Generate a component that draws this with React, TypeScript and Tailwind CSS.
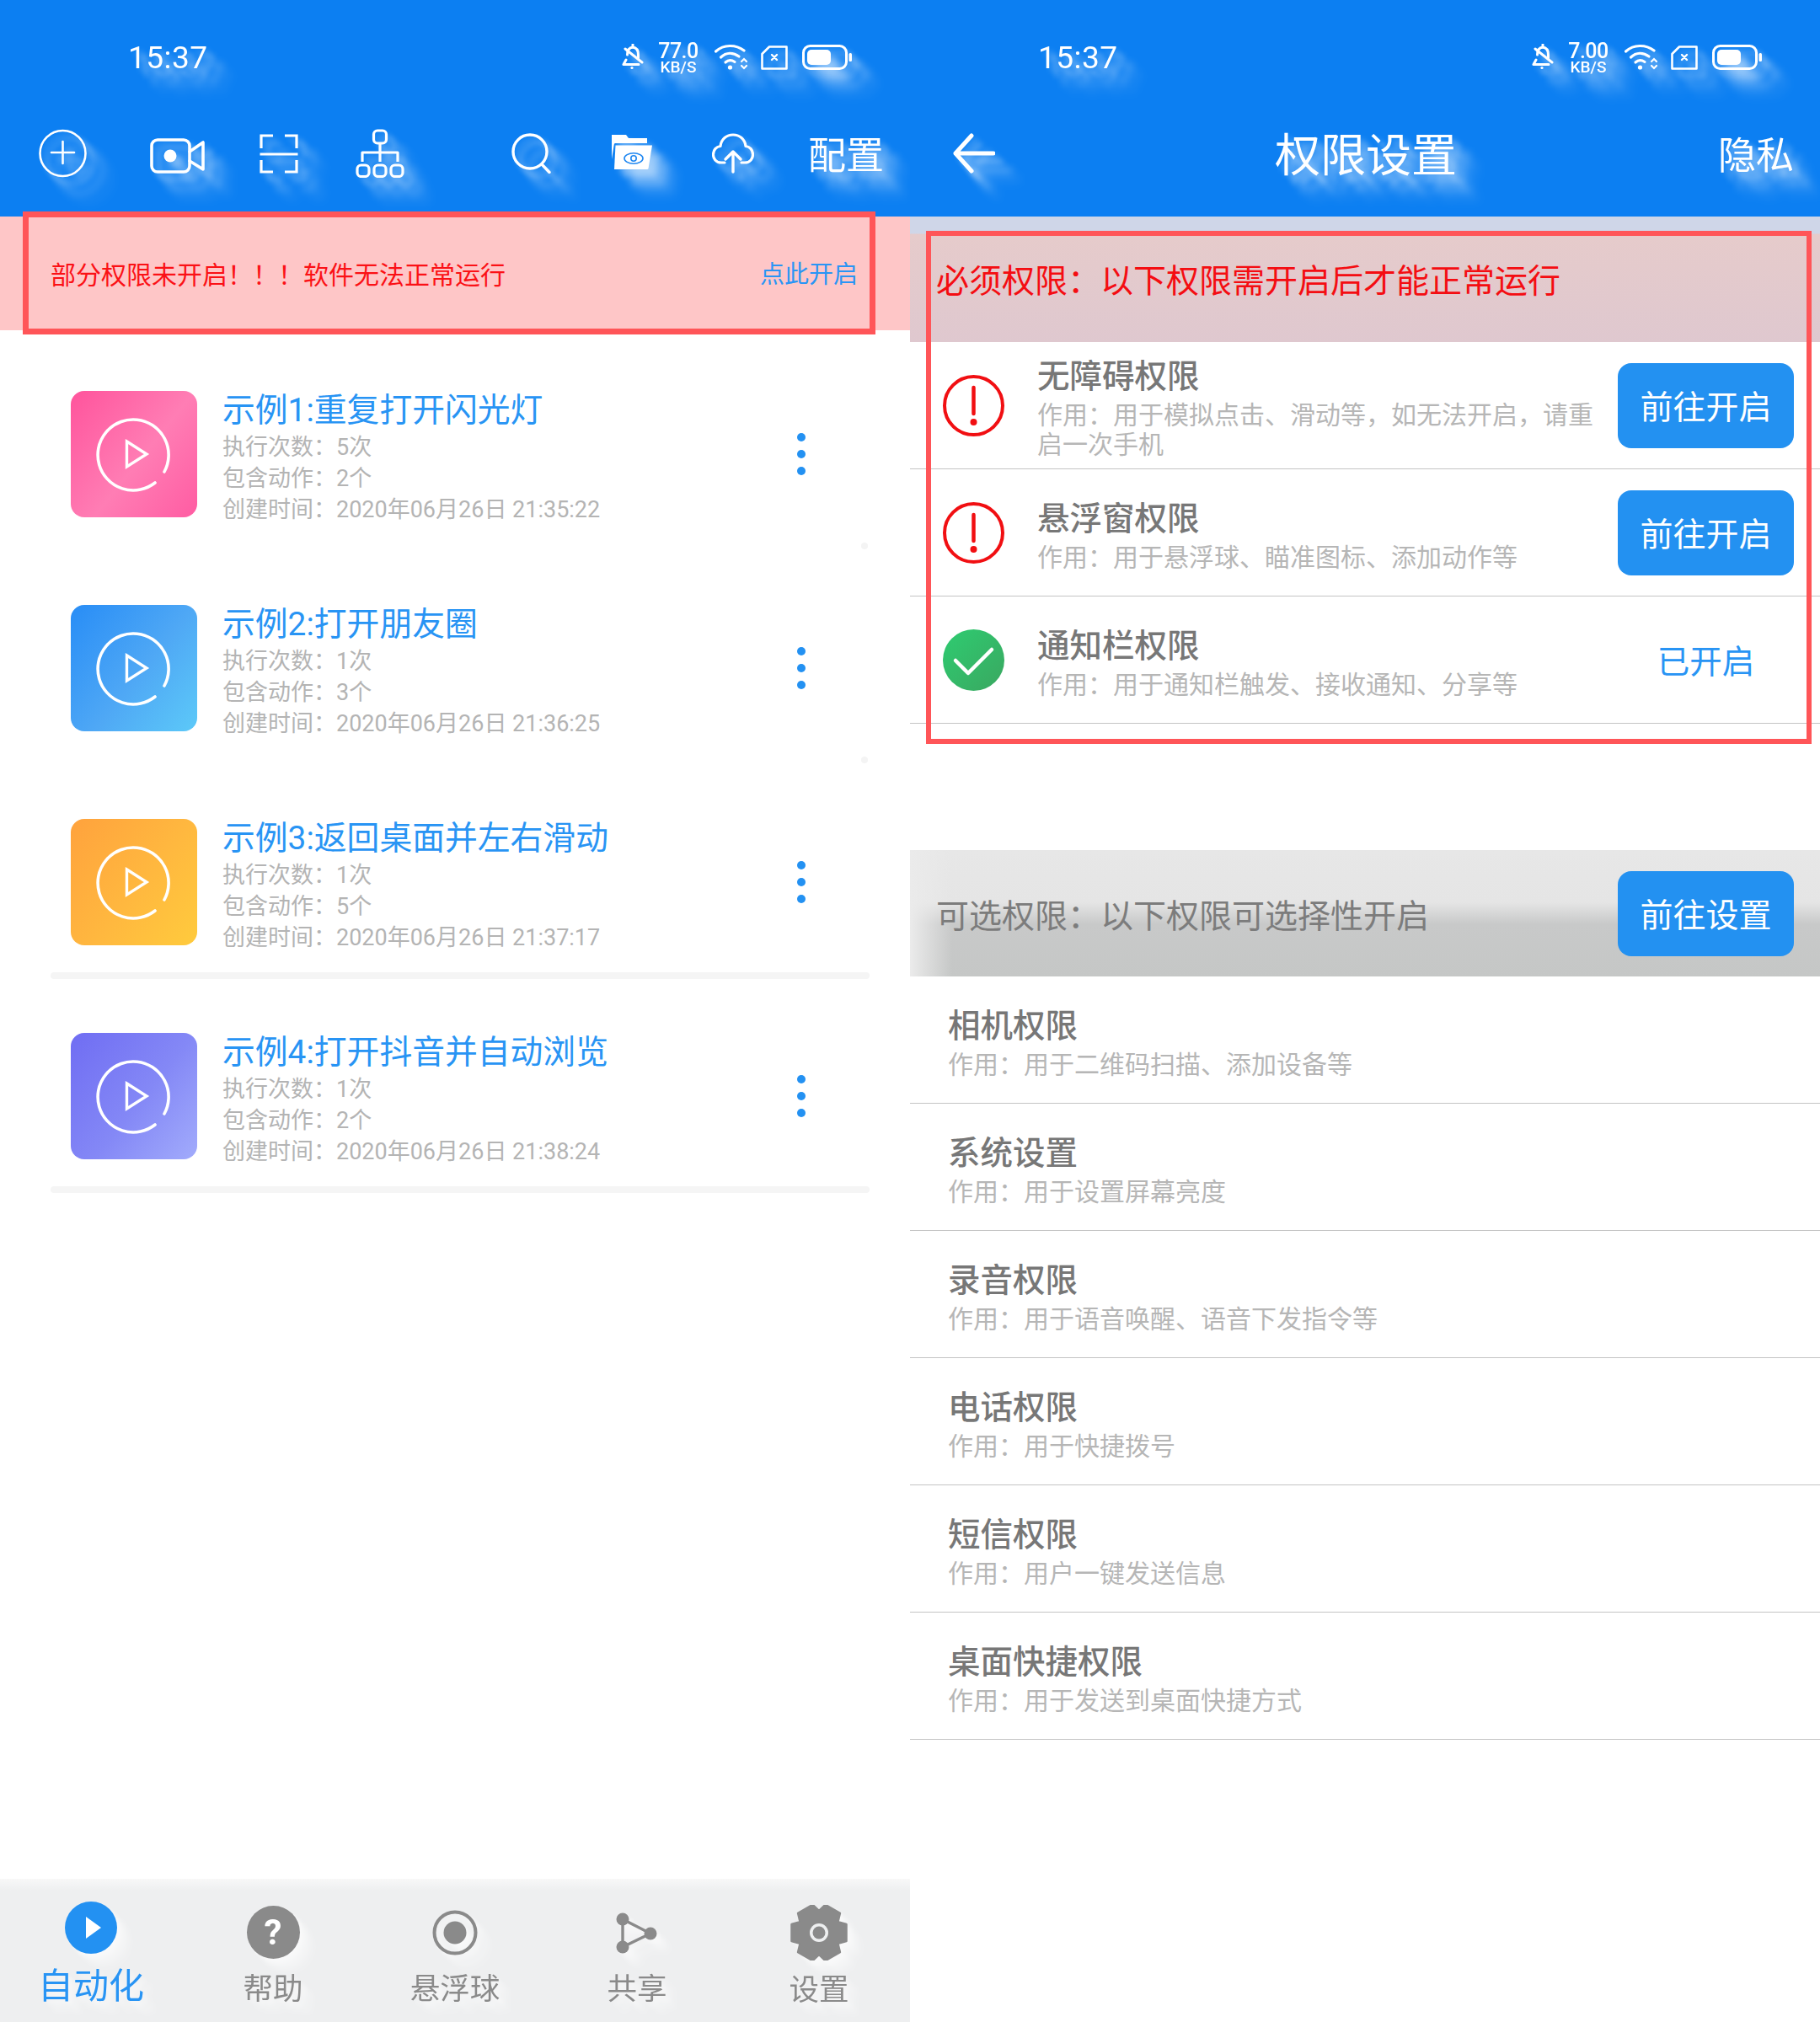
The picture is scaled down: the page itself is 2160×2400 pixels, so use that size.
import React from "react";

const headTrail = "[filter:drop-shadow(5px_5px_3px_rgb(255_255_255/.2))_drop-shadow(10px_10px_3px_rgb(255_255_255/.3))_drop-shadow(20px_20px_5px_rgb(255_255_255/.35))]";
const softTrail = "[filter:drop-shadow(3px_3px_2px_rgb(255_255_255/.25))_drop-shadow(6px_6px_2px_rgb(255_255_255/.3))_drop-shadow(12px_12px_3px_rgb(255_255_255/.35))]";

function BellOff() {
  return (
    <svg width="26" height="32" viewBox="0 0 26 32" fill="none" stroke="white" strokeWidth="3" strokeLinejoin="round" strokeLinecap="round">
      <path d="M5 19 L2 24.5 H20" />
      <path d="M6.5 13 C6.5 7 9 4.5 13 4 C17.5 4.5 19.5 8 19.5 13 V17" />
      <path d="M13 1 V4" />
      <path d="M4 6 L24 22" />
      <circle cx="12" cy="28.5" r="1.6" fill="white" stroke="none" />
    </svg>
  );
}
function Wifi() {
  return (
    <svg width="42" height="32" viewBox="0 0 42 32" fill="none" stroke="white" strokeWidth="3.2" strokeLinecap="round">
      <path d="M1.5 9 C11 0.5 25 0.5 35 8" />
      <path d="M7.5 16 C14 10 22 10 29 15" />
      <path d="M13 22 C16.5 19 20 19 24 21.5" />
      <circle cx="18.5" cy="28" r="2.6" fill="white" stroke="none" />
      <path d="M32 21 L35 18 L38 21 M32 26 L35 29 L38 26" strokeWidth="2.2" />
    </svg>
  );
}
function Sim() {
  return (
    <svg width="32" height="29" viewBox="0 0 32 29" fill="none" stroke="white" strokeWidth="2.6" strokeLinejoin="round" strokeLinecap="round">
      <path d="M10 1.5 H30.5 V27.5 H1.5 V10 Z" />
      <path d="M13 11 L19 17 M19 11 L13 17" strokeWidth="2.4" />
    </svg>
  );
}
function Battery() {
  return (
    <svg width="60" height="30" viewBox="0 0 60 30" fill="none">
      <rect x="1.5" y="1.5" width="51" height="27" rx="8" stroke="white" strokeWidth="3" />
      <rect x="6" y="6" width="28" height="18" rx="5" fill="white" />
      <rect x="55.5" y="10" width="3.5" height="10" rx="1.5" fill="white" />
    </svg>
  );
}
function StatusBar({ speed }: { speed: string }) {
  return (
    <div className={`flex h-[136px] items-center pl-[152px] pr-[68px] text-white ${headTrail}`}>
      <span className="text-[37px] leading-none tracking-[0.5px]">15:37</span>
      <div className="ml-auto flex items-center">
        <BellOff />
        <div className="ml-[17px] flex w-[48px] flex-col items-center pt-[3px] leading-none">
          <span className="text-[25px] leading-[20px] font-medium tracking-[-0.5px]">{speed}</span>
          <span className="text-[19px] leading-[17px] font-medium">KB/S</span>
        </div>
        <div className="ml-[19px]"><Wifi /></div>
        <div className="ml-[13px]"><Sim /></div>
        <div className="ml-[17px]"><Battery /></div>
      </div>
    </div>
  );
}

function LeftToolbar() {
  return (
    <div className={`flex h-[92px] items-center pl-[46px] text-white ${headTrail}`}>
      <svg width="57" height="58" viewBox="0 0 57 58" fill="none" stroke="white" strokeWidth="2.6" strokeLinecap="round">
        <circle cx="28.5" cy="29" r="27" />
        <path d="M15 28 H42 M28.5 15 V41" />
      </svg>
      <svg className="ml-[75px] mt-[6px]" width="65" height="42" viewBox="0 0 65 42" fill="none" stroke="white" strokeWidth="3.6" strokeLinejoin="round">
        <rect x="2" y="2" width="45" height="38" rx="7" />
        <circle cx="24" cy="21" r="7.5" fill="white" stroke="none" />
        <path d="M47 16 L63 5 V37 L47 27" strokeLinecap="round" />
      </svg>
      <svg className="ml-[65px]" width="46" height="47" viewBox="0 0 46 47" fill="none" stroke="white" strokeWidth="3.2">
        <path d="M16 2 H2 V17 M30 2 H44 V17 M0.5 24 H45.5 M2 31 V45 H16 M44 31 V45 H30" />
      </svg>
      <svg className="ml-[68px]" width="58" height="58" viewBox="0 0 58 58" fill="none" stroke="white" strokeWidth="3.2" strokeLinejoin="round">
        <rect x="21.5" y="2" width="15" height="15" rx="4.5" />
        <path d="M29 17 V39 M8 39 V28 H50 V39" />
        <rect x="2" y="43" width="14" height="13.5" rx="4.5" />
        <rect x="22" y="43" width="14" height="13.5" rx="4.5" />
        <rect x="42" y="43" width="14" height="13.5" rx="4.5" />
      </svg>
      <svg className="ml-[127px]" width="47" height="48" viewBox="0 0 47 48" fill="none" stroke="white" strokeWidth="3.4" strokeLinecap="round">
        <circle cx="22" cy="22" r="20" />
        <path d="M36 37 L45 46.5" />
      </svg>
      <svg className="ml-[72px]" width="50" height="46" viewBox="0 0 50 46">
        <path fill="white" d="M0 1 H17 L20 5 H42 V11 H4 Q3 11 2.8 12.5 L0 30 Z" />
        <path fill="white" d="M4.5 13.5 H48 L43.5 41 Q43.3 42 42 42 H3 Z" />
        <ellipse cx="26" cy="29" rx="11" ry="6.2" fill="none" stroke="#1f87f1" strokeWidth="1.6" />
        <circle cx="26" cy="29" r="3.2" fill="none" stroke="#1f87f1" strokeWidth="1.6" />
      </svg>
      <svg className="ml-[69px]" width="50" height="48" viewBox="0 0 50 48" fill="none" stroke="white" strokeWidth="3.2" strokeLinecap="round" strokeLinejoin="round">
        <path d="M15 35 H11 C4.5 35 1.5 30 1.5 25.5 C1.5 20 5 16 10 15.5 C11 7 17.5 2 25 2 C32.5 2 39 7 40 15.5 C45 16 48.5 20 48.5 25.5 C48.5 30 45.5 35 39 35 H35" />
        <path d="M25 46 V22 M16 31 L25 22 L34 31" strokeWidth="3.4" />
      </svg>
      <span className="ml-[64px] pt-[6px] text-[45px] leading-none">配置</span>
    </div>
  );
}

function Play({ id, from, via, to }: { id: string; from: string; via: string; to: string }) {
  return (
    <svg className="h-[150px] w-[150px] shrink-0" viewBox="0 0 150 150">
      <defs>
        <linearGradient id={id} x1="0" y1="0.1" x2="1" y2="0.9">
          <stop offset="0" stopColor={from} />
          <stop offset="0.55" stopColor={via} />
          <stop offset="1" stopColor={to} />
        </linearGradient>
      </defs>
      <rect width="150" height="150" rx="16" fill={`url(#${id})`} />
      <path d="M111 96 A42 42 0 1 0 100 109" fill="none" stroke="white" strokeWidth="3.6" strokeLinecap="round" />
      <path d="M66.5 60 L90 75 L66.5 90 Z" fill="none" stroke="white" strokeWidth="3.4" />
    </svg>
  );
}

const cards = [
  { id: "p1", t: "示例1:重复打开闪光灯", n: "5次", a: "2个", d: "2020年06月26日 21:35:22", c: ["#ff579e", "#ff7db4", "#ff5fa4"], line: false },
  { id: "p2", t: "示例2:打开朋友圈", n: "1次", a: "3个", d: "2020年06月26日 21:36:25", c: ["#2b8ff6", "#4fa8f5", "#5bc6f8"], line: false },
  { id: "p3", t: "示例3:返回桌面并左右滑动", n: "1次", a: "5个", d: "2020年06月26日 21:37:17", c: ["#ffa43d", "#ffb83f", "#ffc93d"], line: true },
  { id: "p4", t: "示例4:打开抖音并自动浏览", n: "1次", a: "2个", d: "2020年06月26日 21:38:24", c: ["#716ff3", "#8488f6", "#9fa8fb"], line: true },
];

function Card({ c }: { c: (typeof cards)[number] }) {
  return (
    <div className="relative flex h-[254px] pl-[84px] pr-[124px]">
      <Play id={c.id} from={c.c[0]} via={c.c[1]} to={c.c[2]} />
      <div className="ml-[30px] flex-1">
        <div className="h-[44px] pt-[1px] text-[38.8px] leading-[44px] text-[#2894f4]">{c.t}</div>
        <div className="mt-[5px] text-[27px] leading-[37px] text-[#b4b4b4]">
          <div>执行次数：{c.n}</div>
          <div>包含动作：{c.a}</div>
          <div>创建时间：{c.d}</div>
        </div>
      </div>
      <div className="mt-[50px] flex h-[50px] w-[10px] flex-col justify-between">
        <span className="h-[10px] w-[10px] rounded-full bg-[#2391f2]" />
        <span className="h-[10px] w-[10px] rounded-full bg-[#2391f2]" />
        <span className="h-[10px] w-[10px] rounded-full bg-[#2391f2]" />
      </div>
      {c.line ? (
        <div className="absolute left-[60px] right-[48px] top-[182px] h-[8px] rounded-full bg-[#f5f5f5]" />
      ) : (
        <div className="absolute right-[50px] top-[180px] h-[8px] w-[8px] rounded-full bg-[#f4f4f4]" />
      )}
    </div>
  );
}

function gearPath(cx: number, cy: number, outer: number, inner: number) {
  const pts: string[] = [];
  for (let i = 0; i < 6; i++) {
    const a = (Math.PI / 3) * i;
    const w = 0.3;
    const s = [
      [a - 0.52, inner],
      [a - w, outer],
      [a + w, outer],
      [a + 0.52, inner],
    ];
    s.forEach(([ang, r]) => pts.push(`${(cx + r * Math.cos(ang)).toFixed(1)} ${(cy + r * Math.sin(ang)).toFixed(1)}`));
  }
  return "M" + pts.join(" L") + " Z";
}

function TabBar() {
  return (
    <div className="mt-auto grid h-[170px] grid-cols-5 bg-[linear-gradient(#f8f8f8,#eeeff0_14px)]">
      <div className={`flex flex-col items-center pt-[27px] ${softTrail}`}>
        <svg width="62" height="62" viewBox="0 0 62 62">
          <circle cx="31" cy="31" r="31" fill="#2391f2" />
          <path d="M25 18 L43 31 L25 44 Z" fill="white" />
        </svg>
        <span className="mt-[14px] text-[42px] leading-[50px] text-[#2894f4]">自动化</span>
      </div>
      <div className={`flex flex-col items-center pt-[32px] text-[#8a8a8a] ${softTrail}`}>
        <div className="flex h-[63px] w-[63px] items-center justify-center rounded-full bg-[#8a8a8a] text-[42px] leading-none font-bold text-white">?</div>
        <span className="mt-[15px] text-[35.5px] leading-[42px]">帮助</span>
      </div>
      <div className={`flex flex-col items-center pt-[37px] text-[#8a8a8a] ${softTrail}`}>
        <svg width="54" height="54" viewBox="0 0 54 54">
          <circle cx="27" cy="27" r="24.5" fill="none" stroke="#8a8a8a" strokeWidth="4" />
          <circle cx="27" cy="27" r="13.5" fill="#8a8a8a" />
        </svg>
        <span className="mt-[19px] text-[35.5px] leading-[42px]">悬浮球</span>
      </div>
      <div className={`flex flex-col items-center pt-[40px] text-[#8a8a8a] ${softTrail}`}>
        <svg width="50" height="50" viewBox="0 0 50 50">
          <path d="M8 8 L41 25 L8 41 Z" fill="none" stroke="#8a8a8a" strokeWidth="3.4" />
          <circle cx="8" cy="8" r="7.5" fill="#8a8a8a" />
          <circle cx="41" cy="25" r="7.5" fill="#8a8a8a" />
          <circle cx="8" cy="41" r="7.5" fill="#8a8a8a" />
        </svg>
        <span className="mt-[20px] text-[35.5px] leading-[42px]">共享</span>
      </div>
      <div className={`flex flex-col items-center pt-[31px] text-[#8a8a8a] ${softTrail}`}>
        <svg width="70" height="66" viewBox="0 0 70 66">
          <path d={gearPath(35, 33, 34, 26)} fill="#8a8a8a" stroke="#8a8a8a" strokeWidth="2.5" strokeLinejoin="round" />
          <circle cx="35" cy="33" r="11" fill="#eeeff0" />
          <circle cx="35" cy="33" r="7.5" fill="#8a8a8a" />
        </svg>
        <span className="mt-[14px] text-[35.5px] leading-[42px]">设置</span>
      </div>
    </div>
  );
}

function Warn() {
  return (
    <svg className="shrink-0" width="73" height="73" viewBox="0 0 73 73">
      <circle cx="36.5" cy="36.5" r="34.5" fill="none" stroke="#f10f12" strokeWidth="4" />
      <path d="M36.5 15 V46" stroke="#f10f12" strokeWidth="4.5" strokeLinecap="round" />
      <circle cx="36.5" cy="56" r="4" fill="#f10f12" />
    </svg>
  );
}
function Ok() {
  return (
    <svg className="shrink-0" width="73" height="73" viewBox="0 0 73 73">
      <defs>
        <linearGradient id="okg" x1="0" y1="0" x2="1" y2="1">
          <stop offset="0" stopColor="#2ecc71" />
          <stop offset="1" stopColor="#3aa760" />
        </linearGradient>
      </defs>
      <circle cx="36.5" cy="36.5" r="36.5" fill="url(#okg)" />
      <path d="M15 37 L30 52 L58 24" fill="none" stroke="white" strokeWidth="4.5" strokeLinecap="round" strokeLinejoin="round" />
    </svg>
  );
}

function GoBtn({ label }: { label: string }) {
  return (
    <div className="flex h-[101px] w-[209px] shrink-0 items-center justify-center rounded-[16px] bg-[#2391f1] pt-[6px] text-[39px] leading-none text-white">
      {label}
    </div>
  );
}

function ReqRow({ icon, title, desc, action }: { icon: React.ReactNode; title: string; desc: string; action: React.ReactNode }) {
  return (
    <div className="flex h-[151px] items-center border-b border-[#c4c4c4] pl-[39px] pr-[31px]">
      {icon}
      <div className="ml-[39px] w-[664px] pt-[5px]">
        <div className="text-[38.5px] leading-[50px] font-medium text-[#777777]">{title}</div>
        <div className="mt-[3px] text-[30px] leading-[35px] text-[#b6b6b6]">{desc}</div>
      </div>
      <div className="ml-auto flex w-[209px] justify-center">{action}</div>
    </div>
  );
}

function OptRow({ title, desc }: { title: string; desc: string }) {
  return (
    <div className="flex h-[151px] flex-col justify-center border-b border-[#c4c4c4] pl-[45px] pt-[5px]">
      <div className="text-[38.5px] leading-[50px] font-medium text-[#777777]">{title}</div>
      <div className="mt-[3px] text-[30px] leading-[35px] text-[#b6b6b6]">{desc}</div>
    </div>
  );
}

const opts = [
  ["相机权限", "作用：用于二维码扫描、添加设备等"],
  ["系统设置", "作用：用于设置屏幕亮度"],
  ["录音权限", "作用：用于语音唤醒、语音下发指令等"],
  ["电话权限", "作用：用于快捷拨号"],
  ["短信权限", "作用：用户一键发送信息"],
  ["桌面快捷权限", "作用：用于发送到桌面快捷方式"],
];

export default function App() {
  return (
    <div className="flex h-[2400px] w-[2160px] overflow-hidden bg-white font-['Roboto','Noto_Sans_CJK_SC',sans-serif]">
      {/* left phone */}
      <div className="relative flex h-full w-[1080px] flex-col">
        <div className="h-[257px] shrink-0 bg-[#0c7ff2]">
          <StatusBar speed="77.0" />
          <LeftToolbar />
        </div>
        <div className="flex h-[135px] shrink-0 items-center bg-[#fec6c7] pt-[4px] pl-[60px] pr-[62px] text-[30px] leading-none">
          <span className="text-[#fb1116]">部分权限未开启！！！软件无法正常运行</span>
          <span className="ml-auto text-[29px] text-[#2a95f5]">点此开启</span>
        </div>
        <div className="pt-[72px]">
          {cards.map((c) => (
            <Card key={c.id} c={c} />
          ))}
        </div>
        <TabBar />
        <div className="absolute left-[27px] top-[251px] h-[146px] w-[1012px] border-[7px] border-[#ff5558]" />
      </div>

      {/* right phone */}
      <div className="relative flex h-full w-[1080px] flex-col">
        <div className="h-[257px] shrink-0 bg-[#0c7ff2]">
          <StatusBar speed="7.00" />
          <div className={`flex h-[92px] items-center pl-[51px] pr-[31px] text-white ${headTrail}`}>
            <svg width="50" height="48" viewBox="0 0 50 48" fill="none" stroke="white" strokeWidth="5" strokeLinecap="round" strokeLinejoin="round">
              <path d="M22 3 L3 24 L22 45 M3 24 H48" />
            </svg>
            <span className="ml-[332px] pt-[8px] text-[54px] leading-none">权限设置</span>
            <span className="ml-auto pt-[6px] text-[45px] leading-none">隐私</span>
          </div>
        </div>
        <div className="flex h-[149px] shrink-0 items-center bg-[linear-gradient(#cfd6e8_0px,#cfd6e8_20px,#e6cbcb_21px,#dfc8cf_100%)] pt-[5px] pl-[31px] text-[39px] leading-none text-[#f40d12]">
          必须权限：以下权限需开启后才能正常运行
        </div>
        <ReqRow
          icon={<Warn />}
          title="无障碍权限"
          desc="作用：用于模拟点击、滑动等，如无法开启，请重启一次手机"
          action={<GoBtn label="前往开启" />}
        />
        <ReqRow icon={<Warn />} title="悬浮窗权限" desc="作用：用于悬浮球、瞄准图标、添加动作等" action={<GoBtn label="前往开启" />} />
        <ReqRow icon={<Ok />} title="通知栏权限" desc="作用：用于通知栏触发、接收通知、分享等" action={<span className="pt-[6px] text-[38.5px] leading-none text-[#2894f4]">已开启</span>} />
        <div className="mt-[150px] flex h-[150px] shrink-0 items-center justify-between bg-[linear-gradient(90deg,#ebebeb_0px,transparent_50px),linear-gradient(#e7e7e7_0px,#e5e5e5_62px,#c8c9c9_88px,#c5c7c6_100%)] pl-[31px] pr-[31px]">
          <span className="pt-[8px] text-[39px] leading-none text-[#7c7c7c]">可选权限：以下权限可选择性开启</span>
          <GoBtn label="前往设置" />
        </div>
        {opts.map(([t, d]) => (
          <OptRow key={t} title={t} desc={d} />
        ))}
        <div className="absolute left-[19px] top-[274px] h-[609px] w-[1051px] border-[6px] border-[#ff5558]" />
      </div>
    </div>
  );
}
